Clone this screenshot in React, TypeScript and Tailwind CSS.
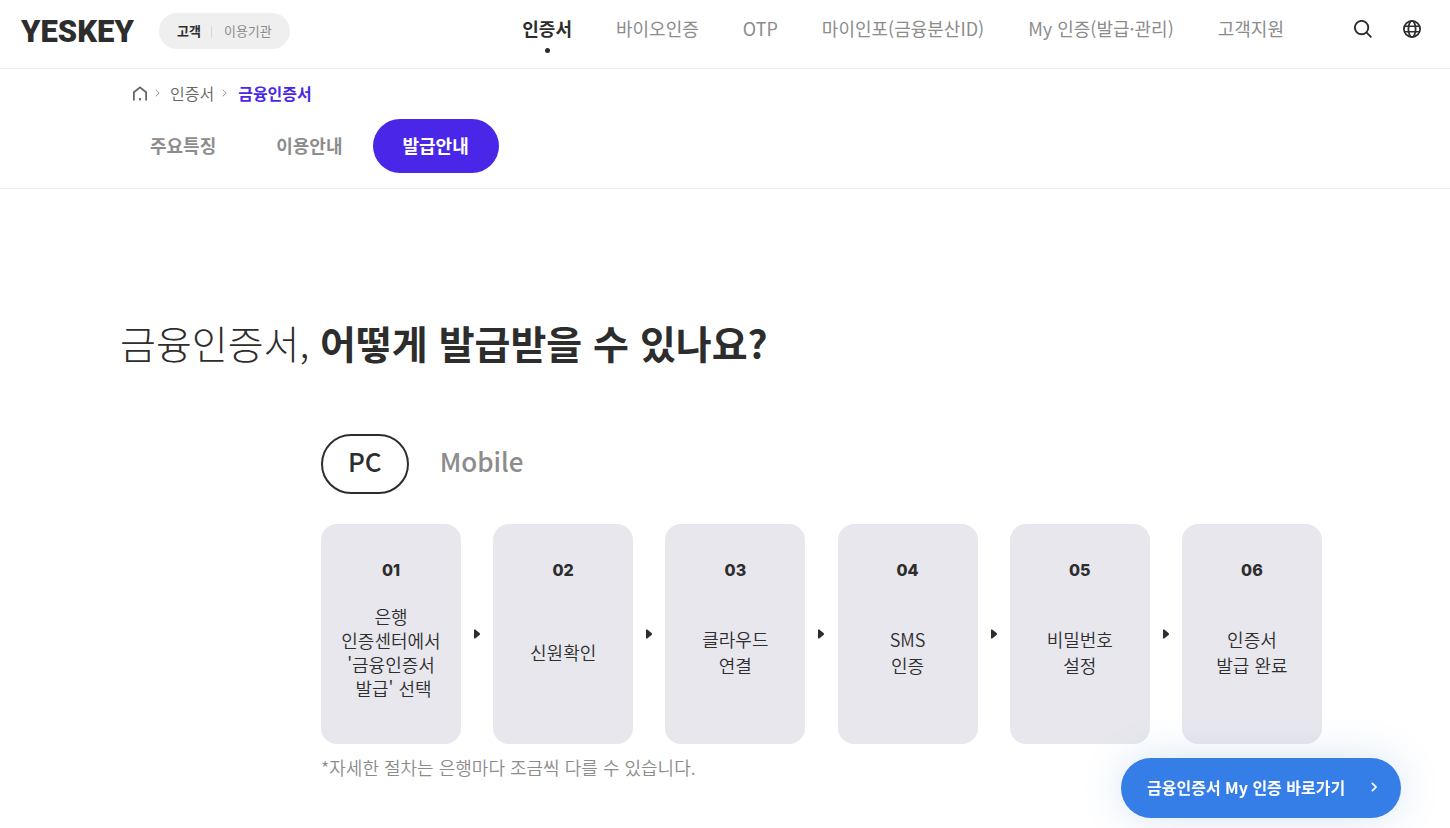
import { Fragment, useState } from "react"
import clsx from "clsx"

const menus = ["인증서", "바이오인증", "OTP", "마이인포(금융분산ID)", "My 인증(발급·관리)", "고객지원"]

const tabs = ["주요특징", "이용안내", "발급안내"]

const steps = [
    { no: "01", lines: ["은행", "인증센터에서", "'금융인증서", " 발급' 선택"] },
    { no: "02", lines: ["신원확인"] },
    { no: "03", lines: ["클라우드", "연결"] },
    { no: "04", lines: ["SMS", "인증"] },
    { no: "05", lines: ["비밀번호", "설정"] },
    { no: "06", lines: ["인증서", "발급 완료"] },
]

const SearchIcon = () => (
    <svg viewBox="0 0 18 18" className="size-[18px]" fill="none" stroke="currentColor" strokeWidth="1.9">
        <circle cx="7.6" cy="7.6" r="6.7" />
        <path d="M12.4 12.4 17.4 17.4" />
    </svg>
)

const GlobeIcon = () => (
    <svg viewBox="0 0 18 18" className="size-[18px]" fill="none" stroke="currentColor" strokeWidth="1.8">
        <circle cx="9" cy="9" r="8.1" />
        <ellipse cx="9" cy="9" rx="3.6" ry="8.1" />
        <path d="M1.6 6.2h14.8M1.6 11.8h14.8" strokeWidth="1.6" />
    </svg>
)

const HomeIcon = () => (
    <svg viewBox="0 0 14 15" className="h-[15px] w-[14px]" fill="none" stroke="currentColor" strokeWidth="1.8">
        <path d="M.9 14.5V6.2L7 1.3l6.1 4.9v8.3" />
        <path d="M7 12v2.5" />
    </svg>
)

const ChevronIcon = ({ className }: { className?: string }) => (
    <svg viewBox="0 0 5 8" className={className} fill="none" stroke="currentColor">
        <path d="M.7.6 4.2 4 .7 7.4" />
    </svg>
)

const StepArrow = () => (
    <svg viewBox="0 0 6 10" className="h-[10px] w-[6px] shrink-0" fill="#2d2d2d">
        <path d="M0 .5h1.2L5.6 4.1q.7.9 0 1.8L1.2 9.5H0z" />
    </svg>
)

const Header = () => (
    <header className="flex h-[69px] items-start border-b border-[#ececec] pl-[21px] pr-[29px]">
        <a href="#" className="mt-[13px] w-[114px] font-['Roboto',sans-serif] text-[31px]/[37px] font-black">YESKEY</a>
        <div className="ml-6 mt-[13px] flex h-9 items-center rounded-full bg-[#efefef] px-[18px] text-[13px]/[18px]">
            <a href="#" className="font-bold">고객</a>
            <span className="mx-[10px] mt-px h-3 w-px bg-[#d5d5d5]" />
            <a href="#" className="pl-[2px] text-[#8c8c8c]">이용기관</a>
        </div>
        <nav className="ml-auto flex gap-11 pt-[15px] text-lg/[26px]">
            {menus.map((menu, i) => (
                <a key={menu} href="#" className={clsx("flex flex-col items-center whitespace-nowrap", i === 0 ? "font-bold" : "text-[#8c8c8c]")}>
                    {menu}
                    {i === 0 && <span className="mt-[7px] size-[5px] rounded-full bg-[#2d2d2d]" />}
                </a>
            ))}
        </nav>
        <div className="ml-[70px] mt-5 flex gap-[31px]">
            <button type="button" aria-label="검색"><SearchIcon /></button>
            <button type="button" aria-label="언어"><GlobeIcon /></button>
        </div>
    </header>
)

const SubHeader = () => {
    const [tab, setTab] = useState("발급안내")

    return (
        <div className="border-b border-[#ececec] pb-[15px] pt-3">
            <div className="mx-auto max-w-[1210px]">
                <div className="flex h-6 items-center pl-[13px] text-base text-[#666]">
                    <a href="#" aria-label="홈"><HomeIcon /></a>
                    <ChevronIcon className="ml-2 h-2 w-[5px] text-[#999]" />
                    <a href="#" className="ml-[10px] font-[350]">인증서</a>
                    <ChevronIcon className="ml-2 h-2 w-[5px] text-[#999]" />
                    <a href="#" className="ml-[11px] font-bold text-[#4a27e8]">금융인증서</a>
                </div>
                <div className="mt-[14px] flex">
                    {tabs.map((name) => (
                        <button
                            key={name}
                            type="button"
                            onClick={() => setTab(name)}
                            className={clsx("h-[54px] rounded-full px-[30px] pb-[2px] text-lg font-bold", tab === name ? "bg-[#4a27e8] text-white" : "text-[#8c8c8c]")}
                        >
                            {name}
                        </button>
                    ))}
                </div>
            </div>
        </div>
    )
}

export default function App() {
    const [device, setDevice] = useState("PC")

    return (
        <div lang="ko" className="bg-white font-['Noto_Sans_CJK_KR',sans-serif] text-[#2d2d2d]">
            <Header />
            <SubHeader />
            <main className="mx-auto max-w-[1210px] pb-11 pt-[123px]">
                <h1 className="text-[39px]/[60px] font-light">
                    금융인증서, <strong className="font-bold">어떻게 발급받을 수 있나요?</strong>
                </h1>
                <div className="pl-[201px] pr-2 pt-[62px]">
                    <div className="flex gap-1">
                        {["PC", "Mobile"].map((name) => (
                            <button
                                key={name}
                                type="button"
                                onClick={() => setDevice(name)}
                                className={clsx("h-[60px] rounded-full border-2 px-[25px] pb-[6px] text-[26px]/[40px] font-medium", device === name ? "border-[#2d2d2d]" : "border-transparent text-[#8c8c8c]")}
                            >
                                {name}
                            </button>
                        ))}
                    </div>
                    <ol className="mt-[30px] flex items-center justify-between">
                        {steps.map(({ no, lines }, i) => (
                            <Fragment key={no}>
                                {i > 0 && <li aria-hidden="true"><StepArrow /></li>}
                                <li className="flex h-[220px] w-[140px] flex-col items-center rounded-[16px] bg-[#e8e7ee] pt-[34px] text-center">
                                    <span className="font-['Inter',sans-serif] text-base/6 font-extrabold">{no}</span>
                                    <p className={clsx("flex h-[140px] flex-col justify-center whitespace-pre text-lg font-[350]", lines.length > 2 ? "leading-6" : "leading-[26px]")}>
                                        {lines.map((line) => <span key={line}>{line}</span>)}
                                    </p>
                                </li>
                            </Fragment>
                        ))}
                    </ol>
                    <p className="mt-[10px] text-lg/[26px] font-[350] text-[#8c8c8c]">*자세한 절차는 은행마다 조금씩 다를 수 있습니다.</p>
                </div>
            </main>
            <a href="#" className="fixed bottom-[10px] right-[49px] flex h-[60px] w-[280px] items-center justify-between rounded-full bg-[#357ee8] pb-[2px] pl-[26px] pr-6 text-base font-bold text-white shadow-[0_0_40px_rgba(53,126,200,0.2)]">
                금융인증서 My 인증 바로가기
                <ChevronIcon className="h-[10px] w-[6px] stroke-[1.4]" />
            </a>
        </div>
    )
}
